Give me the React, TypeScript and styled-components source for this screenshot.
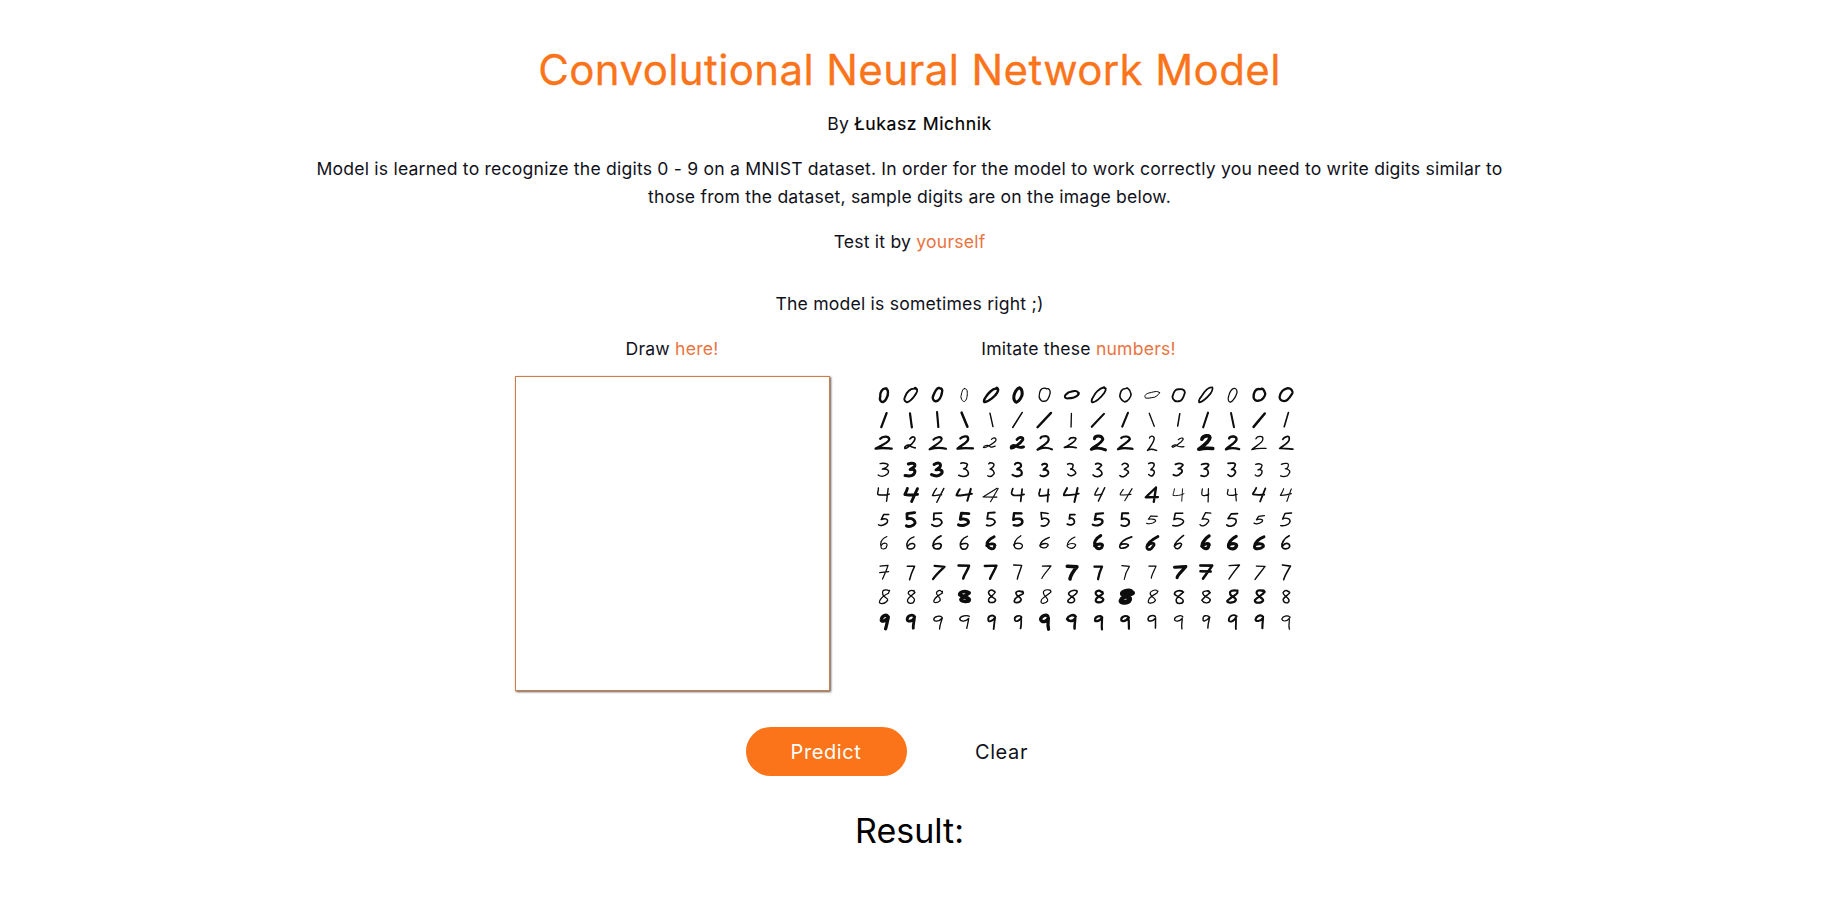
import React from 'react';
import styled, { createGlobalStyle } from 'styled-components';

const GlobalStyle = createGlobalStyle`
  html, body {
    margin: 0;
    padding: 0;
    background: #fff;
  }
  body {
    font-family: 'Inter', 'Liberation Sans', sans-serif;
    color: #11111b;
  }
`;

const Page = styled.main`
  width: 1819px;
  height: 906px;
  overflow: hidden;
  display: flex;
  flex-direction: column;
  align-items: center;
  text-align: center;
  padding-top: 43px;
  box-sizing: border-box;
`;

const Title = styled.h1`
  margin: 0 0 13px;
  font-size: 42px;
  line-height: 54px;
  font-weight: 400;
  letter-spacing: 0.4px;
  -webkit-text-stroke: 0.3px #fb7419;
  color: #fb7419;
`;

const Text = styled.p<{ $gap?: number }>`
  margin: 0 0 ${({ $gap }) => $gap ?? 17}px;
  font-size: 17.6px;
  line-height: 28px;
  letter-spacing: 0.2px;
`;

const Intro = styled(Text)`
  width: 1200px;
`;

const Strong = styled.span`
  font-weight: 400;
  letter-spacing: 0.6px;
  -webkit-text-stroke: 0.2px #000;
  color: #000;
`;

const Accent = styled.span`
  color: #e9743f;
`;

const Workspace = styled.section`
  display: flex;
  gap: 31px;
  padding-right: 8px;
`;

const Column = styled.div<{ $width: number }>`
  width: ${({ $width }) => $width}px;
  display: flex;
  flex-direction: column;
  align-items: center;
`;

const ColumnLabel = styled(Text)`
  margin-bottom: 13px;
`;

const DrawArea = styled.div`
  width: 315px;
  height: 315px;
  box-sizing: border-box;
  background: #fff;
  border: 1px solid #cf7d45;
  box-shadow: 1px 1px 2px rgba(40, 30, 30, 0.75);
`;

const DigitSheet = styled.svg`
  display: block;
  width: 436px;
  height: 315px;
`;

const Actions = styled.div`
  display: flex;
  align-items: center;
  margin: 36px 0 0;
  padding-right: 17px;
  gap: 40px;
`;

const Button = styled.button<{ $primary?: boolean }>`
  width: ${({ $primary }) => ($primary ? 161 : 110)}px;
  height: 49px;
  padding: 0;
  border: 0;
  border-radius: 25px;
  font-family: inherit;
  font-size: 20px;
  letter-spacing: 0.6px;
  background: ${({ $primary }) => ($primary ? '#fb7419' : 'transparent')};
  color: ${({ $primary }) => ($primary ? '#fff' : '#11111b')};
`;

const Result = styled.h2`
  margin: 31px 0 0;
  font-size: 34px;
  line-height: 48px;
  font-weight: 400;
  color: #000;
`;

const DIGIT_PATHS = [
  'M1 -8C-4 -8 -5 -2 -5 2C-5 6 -3 8 -1 8C3 8 5 2 5 -2C5 -6 3 -8 1 -8Z',
  'M.5 -8L-.5 8',
  'M-4 -5C-3 -8 3 -9 3.5 -5C4 -1 -3 4 -6 7C-2 5 3 6 7 7',
  'M-4 -7C-1 -9 4 -8 3 -5C2 -2 -1 -1 -1 -1C3 -1 5 2 3 5C1 8 -3 8 -5 6',
  'M-4 -8C-5 -4 -6 -1 -5 0C-3 1 2 0 5 -1M4 -8L3 8',
  'M4 -8L-3 -8L-4 -1C0 -3 5 -1 4 3C3 7 -2 8 -5 6',
  'M3 -8C-2 -5 -5 0 -4 4C-3 8 3 8 4 4C5 1 0 -1 -4 3',
  'M-5 -7L5 -7C3 -2 0 3 -1 8',
  'M3 -7C0 -9 -4 -7 -3 -4C-2 -1 4 1 4 4C4 8 -3 8 -3 4C-3 1 3 -3 4 -5C4 -6 3.5 -7 3 -7',
  'M4 -6C2 -9 -4 -7 -4 -3C-4 0 1 0 4 -5C4 -1 3 4 3 8',
];

// samples written with a different shape from the rest of their row
const LOOPED_TWO = 'M-3 -5C-1 -9 4 -7 3 -3C2 1 -3 7 -5 6C-7 4 -3 2 0 4C2 5 5 6 7 5';
const CLOSED_FOUR = 'M3 -8L-6 2L6 2M3 -8L3 8';
const CROSSED_SEVEN = 'M-5 -7L5 -7C3 -2 0 3 -1 8M-4 0L4 0';

const VARIANTS: Record<string, string> = {
  '2-1': LOOPED_TWO,
  '2-4': LOOPED_TWO,
  '2-5': LOOPED_TWO,
  '2-11': LOOPED_TWO,
  '4-4': CLOSED_FOUR,
  '4-10': CLOSED_FOUR,
  '7-0': CROSSED_SEVEN,
  '7-12': CROSSED_SEVEN,
};

const ROW_Y = [19, 44, 67, 94, 119, 144, 167, 196, 221, 246];
const FIRST_X = 23;
const STEP_X = 26.8;

// lean, scale x, scale y, stroke width, rotation
type Stroke = [number, number, number, number, number?];

const SAMPLES: Stroke[][] = [
  [[8, .8, .85, 2.2], [25, 1, .85, 1.7], [8, .85, .85, 2.2], [0, .6, .85, .8], [35, .9, .85, 2.2], [10, .8, .85, 2.8], [0, 1.05, .85, 1.1], [0, .6, .9, 1.8, 70], [35, .85, .9, 1.6], [0, 1.1, .8, 1.4], [0, .55, 1, .8, 70], [0, 1.1, .8, 1.6], [35, .7, .9, 1.5], [15, .7, .85, 1], [0, 1.05, .8, 2.1], [10, 1.05, .8, 2]],
  [[20, 1, .85, 2.1], [-8, 1, .9, 2], [-5, 1, .9, 1.9], [-22, 1, .9, 2.3], [-12, 1, .9, 1.2], [28, 1, .85, 1.3], [40, 1, .85, 2.2], [-4, 1, .85, 1.1], [40, 1, .85, 1.9], [18, 1, .85, 1.9], [-25, 1, .85, 1.1], [5, 1, .85, 1.3], [15, 1, .85, 1.8], [-15, 1, .85, 1.8], [38, 1, .85, 2.3], [14, 1, .85, 1.4]],
  [[10, 1.15, .8, 2.1], [20, .85, .85, 1.4], [5, 1.15, .8, 2], [5, 1.15, .85, 2.2], [35, .85, .75, 1], [25, .95, .8, 2.6], [0, 1.15, .85, 1.9], [20, 1, .7, 1.4], [0, 1.1, .9, 2.7], [5, 1.2, .85, 2], [0, .7, .95, 1.2], [30, .95, .7, 1], [0, 1.05, .9, 3.4], [5, 1.05, .85, 2.2], [5, 1.05, .85, 1.1], [5, 1.05, .85, 1.5]],
  [[0, 1.15, .85, 1.1], [10, 1.05, .85, 2.8], [0, 1.05, .85, 2.8], [0, 1.1, .85, 1.3], [0, .75, .85, 1.2], [0, .95, .85, 1.9], [0, .85, .85, 1.7], [-10, .95, .8, 1.3], [0, .9, .85, 1.4], [0, 1, .85, 1.3], [0, .7, .85, 1.3], [15, 1, .8, 1.6], [0, .85, .85, 1.5], [0, .9, .85, 1.5], [5, .85, .8, 1.1], [0, 1, .85, 1]],
  [[0, 1.2, .8, 1.2], [20, 1.25, .8, 2.6], [25, .9, .85, 1.2], [15, 1.35, .8, 1.8], [25, 1.1, .8, .9], [0, 1.15, .8, 1.5], [0, 1, .8, 1.5], [10, 1.3, .8, 1.8], [25, .8, .85, 1.2], [25, 1.05, .75, .9], [10, 1, .85, 2.1], [0, 1, .75, .7], [0, .75, .8, 1], [-5, .9, .8, 1], [15, 1.15, .85, 1.6], [15, .95, .8, .9]],
  [[15, .85, .75, 1.3], [0, 1, .85, 2.6], [0, 1, .85, 1.5], [5, 1, .85, 2.7], [0, .9, .85, 1.6], [-5, 1, .8, 2.2], [-5, .95, .85, 1.4], [5, .7, .75, 1.5], [5, 1, .8, 2], [-5, .9, .85, 1.7], [20, .95, .5, .9], [-5, 1.1, .8, 1.3], [15, .8, .85, 1.1], [10, .95, .85, 1.4], [20, .85, .5, 1.1], [10, 1, .85, 1.2]],
  [[0, .85, .85, .9], [0, .95, .85, 1.2], [0, 1, .85, 1.5], [0, .85, .85, 1.3], [-5, 1, .85, 2.6], [-5, 1, .85, 1.1], [10, 1, .7, 1.2], [0, .95, .8, .9], [-10, 1, .85, 2.8], [25, 1, .75, 1.5], [25, .8, .85, 2.5], [15, .75, .85, 1.3], [0, .95, .85, 3], [0, 1, .85, 3], [10, .95, .85, 2.8], [0, .85, .85, 1.5]],
  [[0, .95, .85, 1], [0, .85, .9, 1.3], [25, 1, .8, 2], [0, 1, .9, 2.3], [0, 1.1, .9, 2.2], [0, .75, .9, 1.2], [20, .8, .8, .9], [8, .9, .85, 3.3], [0, .7, .85, 2], [5, .7, .85, .9], [5, .65, .85, 1], [15, 1, .75, 2.9], [5, 1.05, .85, 2.4], [15, .9, .9, 1.1], [20, .9, .9, 1.2], [8, .85, .9, 1.4]],
  [[18, 1, .9, 1], [5, 1, .85, 1.1], [20, .8, .85, 1], [0, 1.25, .65, 3.4], [0, .95, .85, 1.3], [15, 1, .8, 1.5], [20, .9, .9, 1], [18, 1.05, .85, 1.3], [0, 1.05, .8, 2], [15, 1.3, .75, 4.6], [20, 1, .85, 1], [0, 1.15, .85, 1.4], [0, 1, .85, 1.2], [15, 1.1, .85, 2], [12, 1, .85, 2], [0, .8, .85, 1.2]],
  [[5, .85, .85, 3], [0, .95, .85, 2.6], [5, .95, .85, 1.1], [5, 1.05, .85, 1.1], [0, .85, .85, 1.6], [0, .85, .85, 1.5], [-8, .9, .85, 3], [0, .95, .85, 2.3], [-5, .9, .85, 2], [-5, .95, .85, 2], [-5, .85, .85, 1.3], [0, .9, .85, 1.1], [5, .8, .85, 1.2], [0, .95, .85, 1.6], [0, .85, .85, 1.9], [0, .9, .85, 1]],
];

// nudges every coordinate a little so no two samples of a digit are identical
const handDrawn = (d: string, seed: number) => {
  let n = seed * 97 + 13;
  return d.replace(/-?\d*\.?\d+/g, (value) => {
    n = (n * 73 + 41) % 1009;
    return (parseFloat(value) + (n / 1009 - 0.5) * 1.8).toFixed(2);
  });
};

const Digits: React.FC = () => (
  <DigitSheet viewBox="0 0 436 315" aria-label="Sample MNIST digits">
    <filter id="soft">
      <feGaussianBlur stdDeviation="0.4" />
    </filter>
    <g filter="url(#soft)" fill="none" stroke="#080808" strokeLinecap="round" strokeLinejoin="round">
      {SAMPLES.map((row, digit) =>
        row.map(([lean, sx, sy, width, rotation = 0], i) => (
          <path
            key={`${digit}-${i}`}
            d={handDrawn(VARIANTS[`${digit}-${i}`] ?? DIGIT_PATHS[digit], digit * 16 + i)}
            strokeWidth={width + 0.2}
            vectorEffect="non-scaling-stroke"
            transform={`translate(${FIRST_X + STEP_X * i} ${ROW_Y[digit]}) rotate(${rotation}) skewX(${-lean}) scale(${sx} ${sy})`}
          />
        ))
      )}
    </g>
  </DigitSheet>
);

const App: React.FC = () => (
  <>
    <GlobalStyle />
    <Page>
      <Title>Convolutional Neural Network Model</Title>
      <Text>
        By <Strong>Łukasz Michnik</Strong>
      </Text>
      <Intro>
        Model is learned to recognize the digits 0 - 9 on a MNIST dataset. In order for the model to work correctly you
        need to write digits similar to those from the dataset, sample digits are on the image below.
      </Intro>
      <Text $gap={34}>
        Test it by <Accent>yourself</Accent>
      </Text>
      <Text>The model is sometimes right ;)</Text>
      <Workspace>
        <Column $width={315}>
          <ColumnLabel>
            Draw <Accent>here!</Accent>
          </ColumnLabel>
          <DrawArea />
        </Column>
        <Column $width={436}>
          <ColumnLabel>
            Imitate these <Accent>numbers!</Accent>
          </ColumnLabel>
          <Digits />
        </Column>
      </Workspace>
      <Actions>
        <Button $primary>Predict</Button>
        <Button>Clear</Button>
      </Actions>
      <Result>Result:</Result>
    </Page>
  </>
);

export default App;
